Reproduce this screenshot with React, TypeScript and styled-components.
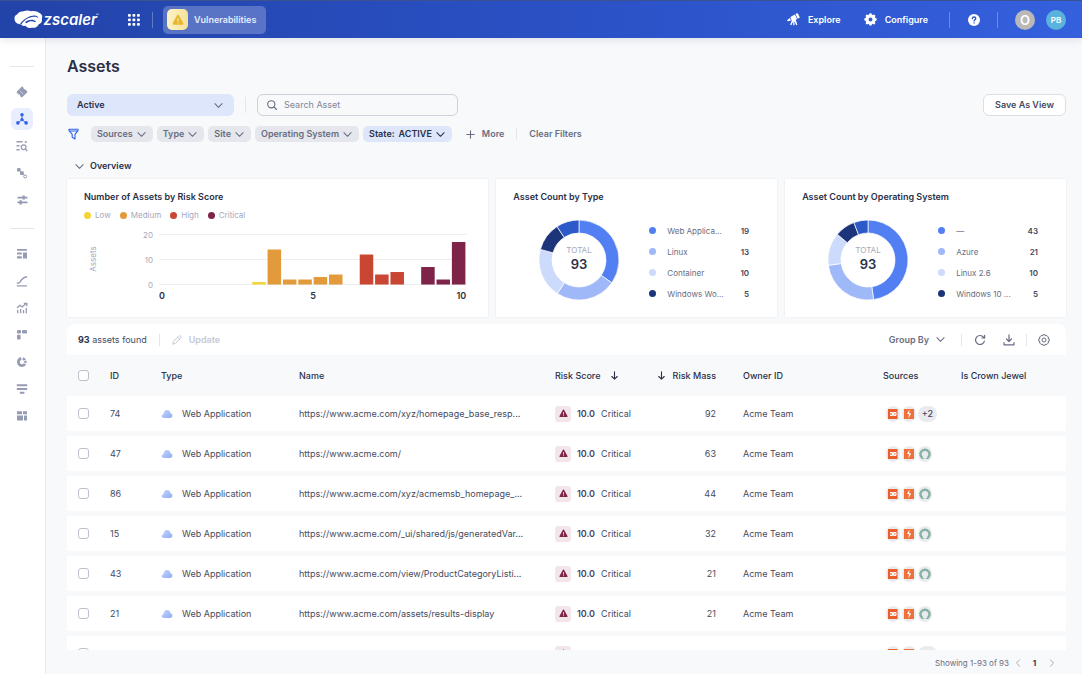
import React from "react";
import styled, { createGlobalStyle } from "styled-components";

const c = {
  page: "#f8f9fb",
  ink: "#2b3048",
  body: "#454a60",
  muted: "#686d82",
  faint: "#a4a9bb",
  line: "#e4e6ec",
  chip: "#e5e7ec",
  blue: "#dde6fb",
  primary: "#2f62ea",
};

const Global = createGlobalStyle`
  * { box-sizing: border-box; }
  body { margin: 0; background: ${c.page}; color: ${c.ink}; font: 9px/14px Inter, "Liberation Sans", sans-serif; }
  button, input, select { font: inherit; color: inherit; margin: 0; }
  button { border: 0; padding: 0; background: none; cursor: pointer; }
  svg { display: block; flex: none; }
  a { color: inherit; text-decoration: none; }
`;

const Shell = styled.div`
  display: flex;
  flex-direction: column;
  height: 100vh;
`;

/* ---------- top bar ---------- */
const TopBar = styled.header`
  display: flex;
  align-items: center;
  flex: none;
  height: 38px;
  padding: 0 16px 0 14px;
  color: #fff;
  background: linear-gradient(90deg, #2243a8, #2a50c4 50%, #3560dd);
  border-top: 1px solid #3b5290;
  box-shadow: 0 2px 8px rgba(40, 50, 90, 0.12);
  position: relative;
`;
const TopNav = styled.nav`
  display: flex;
  gap: 23px;
  margin-left: auto;
  padding-right: 3px;
`;
const TopRule = styled.span<{ $gap: number }>`
  width: 1px;
  height: 16px;
  margin: 0 ${(p) => p.$gap}px;
  background: rgba(255, 255, 255, 0.28);
`;
const AppsButton = styled.button`
  display: flex;
  margin: 0 12px 0 28px;
`;
const ModuleButton = styled.button`
  display: flex;
  align-items: center;
  gap: 6px;
  height: 28px;
  margin-left: 10px;
  padding: 0 10px 0 4px;
  border-radius: 5px;
  background: rgba(255, 255, 255, 0.24);
  color: #e6ebfb;
  font-weight: 600;
`;
const ModuleIcon = styled.span`
  display: grid;
  place-items: center;
  width: 21px;
  height: 21px;
  border-radius: 5px;
  background: linear-gradient(90deg, #fdf3c9, #f5e19a);
`;
const TopLink = styled.a`
  display: flex;
  align-items: center;
  gap: 8px;
  font-weight: 600;
`;
const Avatar = styled.button<{ $color: string; $size: number }>`
  width: 20px;
  height: 20px;
  border-radius: 50%;
  background: ${(p) => p.$color};
  color: #fff;
  font-size: ${(p) => p.$size}px;
  font-weight: 600;
`;
const Avatars = styled.div`
  display: flex;
  gap: 11px;
`;

/* ---------- side bar ---------- */
const Frame = styled.div`
  display: flex;
  flex: 1;
  min-height: 0;
`;
const SideBar = styled.nav`
  display: flex;
  flex-direction: column;
  align-items: center;
  gap: 5px;
  flex: none;
  width: 46px;
  padding: 28px 2px 0 0;
  background: #fff;
  border-right: 1px solid #e9ebf0;
`;
const SideRule = styled.span`
  width: 24px;
  height: 1px;
  margin-bottom: 9px;
  background: ${c.line};
  & ~ & { margin-top: 12px; }
`;
const SideItem = styled.a<{ $active?: boolean }>`
  display: grid;
  place-items: center;
  width: 22px;
  height: 22px;
  border-radius: 6px;
  color: ${(p) => (p.$active ? c.primary : "#959bb2")};
  background: ${(p) => (p.$active ? "#e8eefd" : "transparent")};
`;

/* ---------- main ---------- */
const Main = styled.main`
  display: flex;
  flex-direction: column;
  flex: 1;
  min-width: 0;
  padding: 18px 16px 0 21px;
`;
const Title = styled.h1`
  margin: 0 0 18px;
  font-size: 16px;
  line-height: 20px;
  font-weight: 600;
`;
const ControlRow = styled.div`
  display: flex;
  align-items: center;
  flex: none;
  height: 22px;
`;
const ViewPicker = styled.label`
  display: grid;
  align-items: center;
  width: 167px;
  height: 22px;
  border-radius: 6px;
  background: ${c.blue};
  & > * { grid-area: 1 / 1; }
  & > svg { justify-self: end; margin-right: 11px; color: ${c.muted}; pointer-events: none; }
`;
const ViewSelect = styled.select`
  appearance: none;
  width: 100%;
  height: 22px;
  padding: 0 10px;
  border: 0;
  background: none;
  font-weight: 600;
`;
const Rule = styled.span<{ $gap: number; $tall?: boolean }>`
  width: 1px;
  height: ${(p) => (p.$tall ? 16 : 12)}px;
  margin: 0 ${(p) => p.$gap}px;
  background: ${c.line};
`;
const SearchBox = styled.label`
  display: flex;
  align-items: center;
  gap: 7px;
  width: 201px;
  height: 22px;
  padding: 0 9px;
  border: 1px solid #cfd2dc;
  border-radius: 6px;
  color: ${c.muted};
`;
const SearchInput = styled.input`
  flex: 1;
  min-width: 0;
  padding: 0;
  border: 0;
  outline: 0;
  background: none;
  &::placeholder { color: #80859a; opacity: 1; }
`;
const SaveButton = styled.button`
  height: 22px;
  margin-left: auto;
  padding: 0 11px;
  border: 1px solid #dcdfe6;
  border-radius: 6px;
  background: #fff;
  color: ${c.body};
  font-weight: 600;
`;
const FilterRow = styled.div`
  display: flex;
  align-items: center;
  flex: none;
  gap: 4px;
  height: 16px;
  margin: 10px 0 17px;
  font-weight: 600;
  color: ${c.muted};
`;
const FilterIcon = styled.button`
  margin: 0 8px 0 1px;
  color: ${c.primary};
`;
const Chip = styled.button<{ $on?: boolean }>`
  display: flex;
  align-items: center;
  gap: 4px;
  height: 16px;
  padding: 0 7px 0 6px;
  border-radius: 5px;
  background: ${(p) => (p.$on ? c.blue : c.chip)};
  color: ${(p) => (p.$on ? c.ink : c.muted)};
`;
const TextButton = styled.button<{ $faint?: boolean }>`
  display: flex;
  align-items: center;
  gap: 7px;
  color: ${(p) => (p.$faint ? "#c5c9d5" : c.muted)};
  font-weight: 600;
`;
const MoreButton = styled(TextButton)`
  margin-left: 10px;
`;
const GroupButton = styled(TextButton)`
  padding-right: 4px;
`;
const OverviewToggle = styled.button`
  display: flex;
  align-items: center;
  align-self: flex-start;
  gap: 6px;
  height: 14px;
  margin: 0 0 6px 8px;
  font-weight: 600;
  & > svg { color: ${c.muted}; }
`;

/* ---------- overview cards ---------- */
const Cards = styled.section`
  display: grid;
  grid-template-columns: 3fr 2fr 2fr;
  gap: 8px;
  flex: none;
  min-height: 138px;
`;
const Card = styled.article`
  min-width: 0;
  padding: 11px 17px;
  background: #fff;
  box-shadow: 0 0 2px rgba(40, 50, 90, 0.1);
`;
const CardTitle = styled.h2`
  margin: 0;
  font-size: 9px;
  line-height: 14px;
  font-weight: 600;
`;
const Legend = styled.ul`
  display: flex;
  gap: 9px;
  margin: 5px 0 4px;
  padding: 0;
  list-style: none;
  color: ${c.faint};
  font-size: 8px;
  line-height: 12px;
`;
const LegendItem = styled.li`
  display: flex;
  align-items: center;
  gap: 4px;
`;
const Dot = styled.span<{ $color: string }>`
  flex: none;
  width: 7px;
  height: 7px;
  border-radius: 50%;
  background: ${(p) => p.$color};
`;
const DonutBody = styled.div`
  display: flex;
  align-items: flex-start;
  gap: 30px;
  margin: 16px 11px 0 26px;
`;
const DonutLegend = styled.ul`
  flex: 1;
  min-width: 0;
  margin: 0;
  padding: 0;
  list-style: none;
  font-size: 8px;
`;
const DonutRow = styled.li`
  display: flex;
  align-items: center;
  height: 21px;
`;
const DonutName = styled.span`
  flex: 1;
  margin-left: 11px;
  white-space: nowrap;
  color: ${c.muted};
`;
const DonutValue = styled.strong`
  font-weight: 600;
  color: ${c.body};
`;

/* ---------- table ---------- */
const TablePanel = styled.section`
  flex: 1;
  min-height: 0;
  margin-top: 7px;
  overflow: hidden;
`;
const TableBar = styled.div`
  display: flex;
  align-items: center;
  height: 31px;
  padding: 0 16px 0 11px;
  border-radius: 8px 8px 0 0;
  background: #fff;
`;
const Found = styled.span`
  color: ${c.body};
  & > b { font-weight: 700; color: ${c.ink}; }
`;
const IconButton = styled.button`
  color: ${c.muted};
`;
const BarTools = styled.div`
  display: flex;
  align-items: center;
  margin-left: auto;
`;
const ToolPair = styled.div`
  display: flex;
  gap: 17px;
`;
const Table = styled.table`
  width: 100%;
  table-layout: fixed;
  border-collapse: separate;
  border-spacing: 0;
`;
const HeadCell = styled.th<{ $right?: boolean }>`
  height: 41px;
  padding: 0 ${(p) => (p.$right ? 27 : 0)}px 0 0;
  text-align: ${(p) => (p.$right ? "right" : "left")};
  font-weight: 500;
  white-space: nowrap;
`;
const Cell = styled.td<{ $right?: boolean }>`
  height: 40px;
  padding: 0 ${(p) => (p.$right ? 27 : 0)}px 0 0;
  border-bottom: 5px solid ${c.page};
  background: #fff;
  text-align: ${(p) => (p.$right ? "right" : "left")};
  color: ${c.body};
  white-space: nowrap;
`;
const Line = styled.div<{ $gap: number; $end?: boolean }>`
  display: flex;
  align-items: center;
  justify-content: ${(p) => (p.$end ? "flex-end" : "flex-start")};
  gap: ${(p) => p.$gap}px;
`;
const SourceList = styled.div`
  display: flex;
  gap: 2px;
  padding-left: 3px;
`;
const Check = styled.input`
  display: block;
  appearance: none;
  width: 11px;
  height: 11px;
  margin: 0 0 0 11px;
  border: 1px solid #bcc0cd;
  border-radius: 3px;
  background: #fff;
`;
const RiskBadge = styled.span`
  display: grid;
  place-items: center;
  width: 16px;
  height: 16px;
  border-radius: 3px;
  background: #f2e6eb;
`;
const Score = styled.b`
  font-weight: 600;
`;
const SourceBadge = styled.span`
  display: grid;
  place-items: center;
  min-width: 14px;
  height: 16px;
  border-radius: 8px;
  background: #e9ebf0;
`;
const MoreBadge = styled(SourceBadge)`
  width: 19px;
  font-weight: 500;
`;

const Footer = styled.footer`
  display: flex;
  align-items: center;
  justify-content: flex-end;
  flex: none;
  height: 24px;
  padding: 2px 6px 0 0;
  color: ${c.muted};
  font-size: 8px;
`;
const PageButton = styled.button<{ $current?: boolean }>`
  display: grid;
  place-items: center;
  width: 17px;
  height: 14px;
  font-weight: 700;
  color: ${(p) => (p.$current ? c.ink : c.faint)};
`;

/* ---------- drawings ---------- */
const Chevron = ({ turn = 0, size = 9 }: { turn?: number; size?: number }) => (
  <svg width={size} height={size} viewBox="0 0 10 10" fill="none" stroke="currentColor" strokeWidth="1.2" strokeLinecap="round" strokeLinejoin="round">
    <path d="M1 3l4 4 4-4" transform={`rotate(${turn} 5 5)`} />
  </svg>
);

const Logo = () => (
  <svg width="86" height="20" viewBox="0 0 86 20" role="img" aria-label="zscaler">
    <path
      fill="#fff"
      d="M9.500 1.200C12 .3 15 .3 17 1.300c3-.8 6.500-.1 8.500 1.800 2.600 1.300 3.400 3.600 2.300 5.400.6 2.700-.4 4.900-3 5.700-1 2.800-4.300 4-7.300 3.500-2.900.6-5-.1-5.800-1.900-2 .3-3.500-.2-4.700-1.400C3.500 14.300.8 12.500.7 9.800-.1 7.300 1.200 5 3.300 4.200 4.500 2.500 6.500 1.200 9.500 1.200z"
    />
    <path fill="#2344ab" d="M5.800 14.400C9 9.400 14.500 5.800 20.200 5.500c2.600-.1 4 .9 3.900 2.700-1-1.200-2.200-1.600-4.100-1.500C14.500 7 10 10 7.300 14.600z" />
    <path fill="#2344ab" d="M11 12.300c2.700-2.800 8.300-3.500 11-.8l-1 .8c-2.500-1.600-5.800-1.300-8.200.9z" />
    <text x="29.500" y="14.500" fill="#fff" fontSize="15" fontWeight="600" fontStyle="italic" fontFamily="Inter, sans-serif">zscaler</text>
    <path stroke="#fff" strokeWidth=".6" d="M82 4.200h3" />
  </svg>
);

const AppsIcon = () => (
  <svg width="12" height="12" viewBox="0 0 12 12" fill="#fff">
    {[0, 4.5, 9].map((y) => [0, 4.5, 9].map((x) => <rect key={`${x}-${y}`} x={x} y={y} width="2.800" height="2.800" rx=".8" />))}
  </svg>
);

const WarnIcon = ({ size, fill, mark }: { size: number; fill: string; mark: string }) => (
  <svg width={size} height={size} viewBox="0 0 12 12">
    <path fill={fill} d="M5.100 1.300c.4-.7 1.400-.7 1.800 0l4.400 8c.4.7-.1 1.500-.9 1.500H1.600c-.8 0-1.300-.8-.9-1.500z" />
    <path stroke={mark} strokeWidth="1.100" strokeLinecap="round" d="M6 4.600v2.500M6 8.900v.1" />
  </svg>
);

const ScopeIcon = () => (
  <svg width="13" height="13" viewBox="0 0 13 13" fill="#fff">
    <path d="M8.500.9l1.300-.6c.5-.2 1 0 1.200.4l1.600 3.200c.2.500 0 1-.5 1.200l-1.300.6z" />
    <path d="M3.400 4.100l4.500-2.700 2.200 4.700-1.400.7 1.700 4.900-1.200.5-1.700-4.100v4.100H6.200V8.400L4.300 12.300l-1.200-.5 1.600-4z" />
    <path d="M.6 6.700l2.200-1.800 1.200 2.600-2.900.7C.2 8.400-.1 7.300.6 6.700z" />
  </svg>
);

const CogSolid = () => (
  <svg width="13" height="13" viewBox="0 0 13 13">
    <circle cx="6.500" cy="6.500" r="3.500" fill="none" stroke="#fff" strokeWidth="3" />
    <g stroke="#fff" strokeWidth="2.800" strokeLinecap="round">
      {[0, 45, 90, 135, 180, 225, 270, 315].map((a) => (
        <path key={a} d="M6.500 1.700v1" transform={`rotate(${a} 6.500 6.500)`} />
      ))}
    </g>
  </svg>
);

const HelpIcon = () => (
  <svg width="12" height="12" viewBox="0 0 12 12">
    <circle cx="6" cy="6" r="6" fill="#fff" />
    <path d="M4.300 4.700C4.300 3.500 5 3 6 3s1.800.6 1.800 1.500C7.800 5.700 6.100 5.600 6.100 7M6.100 8.900v.1" fill="none" stroke="#2c55cb" strokeWidth="1.300" strokeLinecap="round" />
  </svg>
);

const FunnelIcon = () => (
  <svg width="11" height="12" viewBox="0 0 11 12" fill="none" stroke="currentColor" strokeWidth="1.100" strokeLinejoin="round">
    <path d="M1 1.200h9v1.400L7 6.300V11L4.200 9.300v-3L1 2.600zM1.300 3h8.400" />
  </svg>
);

const SearchIcon = () => (
  <svg width="10" height="10" viewBox="0 0 10 10" fill="none" stroke="currentColor" strokeWidth="1.100" strokeLinecap="round">
    <circle cx="4.300" cy="4.300" r="3.600" />
    <path d="M7 7l2.500 2.500" />
  </svg>
);

const PlusIcon = () => (
  <svg width="9" height="9" viewBox="0 0 9 9" stroke="currentColor" strokeWidth="1.100" strokeLinecap="round">
    <path d="M4.500.8v7.400M.8 4.500h7.400" />
  </svg>
);

const ArrowDown = () => (
  <svg width="7" height="9" viewBox="0 0 7 9" fill="none" stroke="currentColor" strokeWidth="1.100" strokeLinecap="round" strokeLinejoin="round">
    <path d="M3.500.7v7.400M.8 5.500l2.700 2.700 2.700-2.700" />
  </svg>
);

const PencilIcon = () => (
  <svg width="10" height="10" viewBox="0 0 10 10" fill="none" stroke="currentColor" strokeWidth="1" strokeLinejoin="round">
    <path d="M.8 9.200l.6-2.800L6.700 1.100c.6-.6 1.400-.5 1.900 0s.6 1.300 0 1.900L3.500 8.400zM5.600 2.200l2 2" />
  </svg>
);

const RefreshIcon = () => (
  <svg width="12" height="12" viewBox="0 0 12 12" fill="none" stroke="currentColor" strokeWidth="1.200" strokeLinecap="round" strokeLinejoin="round">
    <path d="M10.400 7.200A4.500 4.500 0 1 1 9.600 3.200L10.500 4M10.600 1.300V4H8" />
  </svg>
);

const DownloadIcon = () => (
  <svg width="12" height="12" viewBox="0 0 12 12" fill="none" stroke="currentColor" strokeWidth="1.200" strokeLinecap="round" strokeLinejoin="round">
    <path d="M6 .8v6.600M3.500 5L6 7.500 8.500 5M1 8.500v2.300h10V8.500" />
  </svg>
);

const CogOutline = () => (
  <svg width="12" height="12" viewBox="0 0 12 12" fill="none" stroke="currentColor" strokeWidth="1" strokeLinejoin="round">
    <path d="M4.900.8h2.200l.5 1.100 1.200-.4 1.600 1.600-.4 1.200 1.200.6v2.200l-1.200.6.400 1.200-1.600 1.600-1.200-.4-.5 1.100H4.900l-.5-1.100-1.200.4-1.600-1.600.400-1.200-1.200-.6V4.900L2 4.300l-.4-1.200 1.600-1.600 1.200.4z" />
    <circle cx="6" cy="6" r="2" />
  </svg>
);

const CloudIcon = () => (
  <svg width="12" height="10" viewBox="0 0 12 10">
    <defs>
      <linearGradient id="cloud" x1="0" x2="1" y1="0" y2="1">
        <stop offset="0" stopColor="#c4d4fb" />
        <stop offset="1" stopColor="#8dabf6" />
      </linearGradient>
    </defs>
    <path fill="url(#cloud)" d="M3 9C1.500 9 .7 8.100.7 7.100c0-1.100.7-1.800 1.800-1.900C2.500 2.700 4 1 6 1c1.900 0 3.100 1.200 3.400 3.200 1.300.3 2 1.200 2 2.400C11.400 8.100 10.500 9 9 9z" />
  </svg>
);

const TileSource = () => (
  <svg width="10" height="10" viewBox="0 0 10 10">
    <rect width="9.500" height="10" fill="#e8602c" />
    <path stroke="#fff" strokeWidth="1" fill="none" d="M2 3.500h2.500v3H2M2.300 5h2M5.500 3.500H8v3H5.500zM5.700 5H8" />
  </svg>
);

const BoltSource = () => (
  <svg width="10" height="10" viewBox="0 0 10 10">
    <rect width="10" height="10" fill="#f0703a" />
    <path fill="#fff" d="M5.300.8L3 5h1.900L4.500 9.200l2.700-4.600H5.300z" />
  </svg>
);

const RingSource = () => (
  <svg width="12" height="12" viewBox="0 0 12 12">
    <path fill="none" stroke="#86b3a0" strokeWidth="2.400" d="M3.500 10A4.500 4.500 0 1 1 8.500 10" />
    <path fill="none" stroke="#86b3a0" strokeWidth="1" d="M3 10.500h2.200M6.800 10.500H9" />
  </svg>
);

const sideIcons: Record<string, React.ReactNode> = {
  Tickets: (
    <>
      <path d="M6.700.9l1 1c-.3.9.6 1.700 1.400 1.300l2 2c.4.400.4.900 0 1.300L6.400 11c-.4.400-.9.400-1.300 0l-1-1c.4-.9-.5-1.700-1.300-1.300L.9 6.800c-.4-.4-.4-.9 0-1.300L5.400.9c.4-.4.900-.4 1.300 0z" />
      <path stroke="#fff" strokeWidth=".8" strokeDasharray="1 .8" d="M3.800 4.700l3.800 3.700" />
    </>
  ),
  Assets: (
    <>
      <circle cx="6" cy="1.700" r="1.700" />
      <circle cx="6" cy="6.600" r="1.600" />
      <circle cx="1.900" cy="9.900" r="1.800" />
      <circle cx="10.100" cy="9.900" r="1.800" />
      <path fill="none" stroke="currentColor" strokeWidth=".9" d="M6 2v4.500L2 10M6 6.500l4 3.500" />
    </>
  ),
  Findings: (
    <>
      <path d="M.5 1h6v1.400h-6zM9.800.5l1.600 2.200H8.300zM.5 5h3v1.400h-3zM.5 9h3v1.400h-3z" />
      <circle cx="7.600" cy="7.200" r="2.400" fill="none" stroke="currentColor" strokeWidth="1.200" />
      <path stroke="currentColor" strokeWidth="1.300" d="M9.300 9l2 2" />
    </>
  ),
  Paths: (
    <>
      <rect x="1" y="1" width="3.600" height="3.600" rx="1.200" />
      <rect x="4" y="4.200" width="3.800" height="3.800" rx="1.200" />
      <circle cx="9.200" cy="9.500" r="1.500" fill="none" stroke="currentColor" strokeWidth="1" />
      <path stroke="currentColor" strokeWidth="1" d="M2 2l6.200 6.300" />
    </>
  ),
  Adjustments: <path d="M1.500 2.700h5V1.500h2.300v1.200h2.700v1.700H8.800v1.200H6.500V4.400h-5zM1.500 7.500h2V6.300h2.300v1.200h5.700v1.700H5.800v1.200H3.500V9.200h-2z" />,
  Dashboard: <path d="M1 1h10v1.800H1zM1 4.400h4.800v2.200H1zM1 8.200h4.800v2.400H1zM7 4.400h4v6.200H7z" />,
  Trend: <path fill="none" stroke="currentColor" strokeWidth="1.400" d="M.8 8.200c4 0 3-1.600 5-3.700S8.500 2 11 1.800M.8 10.900H11" />,
  Growth: (
    <path fill="none" stroke="currentColor" strokeWidth="1.300" d="M1 6l2.800-2.700 2.400 1.600L9.800 1.700M7.800 1.300h3v3M1.700 8v3.200M4.600 7v4.200M7.500 8v3.200M10.300 6v5.200" />
  ),
  Layout: (
    <>
      <rect x="1" y="1" width="4" height="3.600" rx="1" />
      <rect x="6" y="1" width="5" height="3.600" rx="1" />
      <rect x="1" y="5.800" width="3.600" height="4.800" rx="1" />
    </>
  ),
  Breakdown: (
    <>
      <path fill="none" stroke="currentColor" strokeWidth="2.800" d="M5.300 2.500a3.600 3.600 0 1 0 3.700 5.400" />
      <path fill="none" stroke="currentColor" strokeWidth="2.400" strokeDasharray="2.600 .8" d="M6.800 2.500A3.600 3.600 0 0 1 9.300 7" />
    </>
  ),
  Funnel: <path d="M.8 1.200h10.400v2H.8zM.8 4.900h10.400v2H.8zM3.800 8.700h4.600v2.100H3.800z" />,
  Widgets: <path d="M1 1.200h5v3H1zM7 1.200h4v3H7zM1 5.400h6v5.200H1zM8 5.400h3v5.200H8z" />,
};

const SideLink = ({ name, active }: { name: string; active?: boolean }) => (
  <SideItem href="#" $active={active} aria-label={name}>
    <svg width="12" height="12" viewBox="0 0 12 12" fill="currentColor">{sideIcons[name]}</svg>
  </SideItem>
);

/* ---------- charts ---------- */
const risk = { low: "#f3d33a", medium: "#e29a3a", high: "#c94632", critical: "#7e2448" };
const bars: [number, number, string][] = [
  [6, 1, risk.low],
  [7, 14, risk.medium],
  [8, 2, risk.medium],
  [9, 2, risk.medium],
  [10, 3, risk.medium],
  [11, 4, risk.medium],
  [13, 12, risk.high],
  [14, 4, risk.high],
  [15, 5, risk.high],
  [17, 7, risk.critical],
  [18, 2, risk.critical],
  [19, 17, risk.critical],
];

const BarChart = () => (
  <svg width="100%" viewBox="0 0 387 80" fontFamily="Inter, sans-serif" fontSize="9">
    {[20, 10, 0].map((v) => (
      <g key={v}>
        <path stroke="#eceef2" d={`M75 ${59.5 - v * 2.5}H382`} />
        <text x="69" y={62.5 - v * 2.5} textAnchor="end" fill={c.faint} fontSize="8">{v}</text>
      </g>
    ))}
    <text transform="translate(12 34) rotate(-90)" textAnchor="middle" fill={c.faint} fontSize="8">Assets</text>
    {bars.map(([slot, v, fill]) => (
      <rect key={slot} x={76 + slot * 15.35} y={59.5 - v * 2.5} width="13.500" height={v * 2.5} fill={fill} />
    ))}
    <g fill={c.ink} fontWeight="600">
      <text x="78" y="74" textAnchor="middle">0</text>
      <text x="229" y="74" textAnchor="middle">5</text>
      <text x="382" y="74" textAnchor="end">10</text>
    </g>
  </svg>
);

const donutColors = ["#527ff2", "#9fb8f8", "#ccdafb", "#1c3479", "#2e5ac9"];
const onCircle = (deg: number, r: number) => {
  const a = ((deg - 90) * Math.PI) / 180;
  return `${40 + r * Math.cos(a)} ${40 + r * Math.sin(a)}`;
};
const Donut = ({ stops }: { stops: number[] }) => {
  const edges = [0, ...stops, 360];
  return (
    <svg width="80" height="80" viewBox="0 0 80 80" fontFamily="Inter, sans-serif" textAnchor="middle">
      {donutColors.map((color, i) => {
        const from = edges[i];
        const to = edges[i + 1];
        return (
          <path key={color} fill={color} stroke="#fff" strokeWidth=".7" d={`M${onCircle(from, 40)}A40 40 0 0 1 ${onCircle(to, 40)}L${onCircle(to, 27)}A27 27 0 0 0 ${onCircle(from, 27)}Z`} />
        );
      })}
      <text x="40" y="33" fontSize="8" fill={c.faint}>TOTAL</text>
      <text x="40" y="49" fontSize="13" fontWeight="600" fill={c.ink}>93</text>
    </svg>
  );
};

const DonutCard = ({ title, stops, rows }: { title: string; stops: number[]; rows: [string, number][] }) => (
  <Card>
    <CardTitle>{title}</CardTitle>
    <DonutBody>
      <Donut stops={stops} />
      <DonutLegend>
        {rows.map(([name, value], i) => (
          <DonutRow key={name}>
            <Dot $color={donutColors[i]} />
            <DonutName>{name}</DonutName>
            <DonutValue>{value}</DonutValue>
          </DonutRow>
        ))}
      </DonutLegend>
    </DonutBody>
  </Card>
);

/* ---------- data ---------- */
const assets = [
  { id: 74, name: "https://www.acme.com/xyz/homepage_base_resp...", mass: 92, extra: true },
  { id: 47, name: "https://www.acme.com/", mass: 63 },
  { id: 86, name: "https://www.acme.com/xyz/acmemsb_homepage_...", mass: 44 },
  { id: 15, name: "https://www.acme.com/_ui/shared/js/generatedVar...", mass: 32 },
  { id: 43, name: "https://www.acme.com/view/ProductCategoryListi...", mass: 21 },
  { id: 21, name: "https://www.acme.com/assets/results-display", mass: 21 },
  { id: 71, name: "https://www.acme.com/xyz/homepage_base_resp...", mass: 18, extra: true },
];

export default function App() {
  return (
    <Shell>
      <Global />
      <TopBar>
        <a href="#"><Logo /></a>
        <AppsButton aria-label="Applications"><AppsIcon /></AppsButton>
        <TopRule $gap={0} />
        <ModuleButton>
          <ModuleIcon><WarnIcon size={12} fill="#e9b62f" mark="#fbeeb8" /></ModuleIcon>
          Vulnerabilities
        </ModuleButton>
        <TopNav>
          <TopLink href="#"><ScopeIcon />Explore</TopLink>
          <TopLink href="#"><CogSolid />Configure</TopLink>
        </TopNav>
        <TopRule $gap={18} />
        <button aria-label="Help"><HelpIcon /></button>
        <TopRule $gap={17} />
        <Avatars>
          <Avatar $color="#b9b9ba" $size={13}>O</Avatar>
          <Avatar $color="#58b4dc" $size={8}>PB</Avatar>
        </Avatars>
      </TopBar>
      <Frame>
        <SideBar>
          <SideRule />
          <SideLink name="Tickets" />
          <SideLink name="Assets" active />
          <SideLink name="Findings" />
          <SideLink name="Paths" />
          <SideLink name="Adjustments" />
          <SideRule />
          <SideLink name="Dashboard" />
          <SideLink name="Trend" />
          <SideLink name="Growth" />
          <SideLink name="Layout" />
          <SideLink name="Breakdown" />
          <SideLink name="Funnel" />
          <SideLink name="Widgets" />
        </SideBar>
        <Main>
          <Title>Assets</Title>
          <ControlRow>
            <ViewPicker>
              <ViewSelect aria-label="View"><option>Active</option></ViewSelect>
              <Chevron />
            </ViewPicker>
            <Rule $gap={11} $tall />
            <SearchBox>
              <SearchIcon />
              <SearchInput placeholder="Search Asset" aria-label="Search Asset" />
            </SearchBox>
            <SaveButton>Save As View</SaveButton>
          </ControlRow>
          <FilterRow>
            <FilterIcon aria-label="Filters"><FunnelIcon /></FilterIcon>
            {["Sources", "Type", "Site", "Operating System"].map((f) => (
              <Chip key={f}>{f}<Chevron /></Chip>
            ))}
            <Chip $on><span>State:</span><span>ACTIVE</span><Chevron /></Chip>
            <MoreButton><PlusIcon />More</MoreButton>
            <Rule $gap={8} />
            <TextButton>Clear Filters</TextButton>
          </FilterRow>
          <OverviewToggle><Chevron />Overview</OverviewToggle>
          <Cards>
            <Card>
              <CardTitle>Number of Assets by Risk Score</CardTitle>
              <Legend>
                <LegendItem><Dot $color={risk.low} />Low</LegendItem>
                <LegendItem><Dot $color={risk.medium} />Medium</LegendItem>
                <LegendItem><Dot $color={risk.high} />High</LegendItem>
                <LegendItem><Dot $color={risk.critical} />Critical</LegendItem>
              </Legend>
              <BarChart />
            </Card>
            <DonutCard
              title="Asset Count by Type"
              stops={[124.8, 212.8, 285.4, 326.7]}
              rows={[["Web Applica...", 19], ["Linux", 13], ["Container", 10], ["Windows Wo...", 5]]}
            />
            <DonutCard
              title="Asset Count by Operating System"
              stops={[171.9, 262.4, 309.9, 339.4]}
              rows={[["—", 43], ["Azure", 21], ["Linux 2.6", 10], ["Windows 10 ...", 5]]}
            />
          </Cards>
          <TablePanel>
            <TableBar>
              <Found><b>93</b> assets found</Found>
              <Rule $gap={12} />
              <TextButton $faint disabled><PencilIcon />Update</TextButton>
              <BarTools>
                <GroupButton>Group By<Chevron /></GroupButton>
                <Rule $gap={12} />
                <ToolPair>
                  <IconButton aria-label="Refresh"><RefreshIcon /></IconButton>
                  <IconButton aria-label="Download"><DownloadIcon /></IconButton>
                </ToolPair>
                <Rule $gap={11} />
                <IconButton aria-label="Table settings"><CogOutline /></IconButton>
              </BarTools>
            </TableBar>
            <Table>
              <colgroup>
                <col width="43" />
                <col width="51" />
                <col width="138" />
                <col />
                <col width="90" />
                <col width="98" />
                <col width="140" />
                <col width="78" />
                <col width="105" />
              </colgroup>
              <thead>
                <tr>
                  <HeadCell><Check type="checkbox" aria-label="Select all assets" /></HeadCell>
                  <HeadCell>ID</HeadCell>
                  <HeadCell>Type</HeadCell>
                  <HeadCell>Name</HeadCell>
                  <HeadCell><Line $gap={11}>Risk Score<ArrowDown /></Line></HeadCell>
                  <HeadCell $right><Line $gap={8} $end><ArrowDown />Risk Mass</Line></HeadCell>
                  <HeadCell>Owner ID</HeadCell>
                  <HeadCell>Sources</HeadCell>
                  <HeadCell>Is Crown Jewel</HeadCell>
                </tr>
              </thead>
              <tbody>
                {assets.map((a) => (
                  <tr key={a.id}>
                    <Cell><Check type="checkbox" aria-label={`Select asset ${a.id}`} /></Cell>
                    <Cell>{a.id}</Cell>
                    <Cell><Line $gap={9}><CloudIcon />Web Application</Line></Cell>
                    <Cell>{a.name}</Cell>
                    <Cell>
                      <Line $gap={6}>
                        <RiskBadge><WarnIcon size={9} fill="#7e2448" mark="#f2e6eb" /></RiskBadge>
                        <Score>10.0</Score>
                        Critical
                      </Line>
                    </Cell>
                    <Cell $right>{a.mass}</Cell>
                    <Cell>Acme Team</Cell>
                    <Cell>
                      <SourceList>
                        <SourceBadge><TileSource /></SourceBadge>
                        <SourceBadge><BoltSource /></SourceBadge>
                        {a.extra ? <MoreBadge>+2</MoreBadge> : <SourceBadge><RingSource /></SourceBadge>}
                      </SourceList>
                    </Cell>
                    <Cell />
                  </tr>
                ))}
              </tbody>
            </Table>
          </TablePanel>
          <Footer>
            Showing 1-93 of 93
            <PageButton aria-label="Previous page"><Chevron turn={90} size={8} /></PageButton>
            <PageButton $current>1</PageButton>
            <PageButton aria-label="Next page"><Chevron turn={-90} size={8} /></PageButton>
          </Footer>
        </Main>
      </Frame>
    </Shell>
  );
}
